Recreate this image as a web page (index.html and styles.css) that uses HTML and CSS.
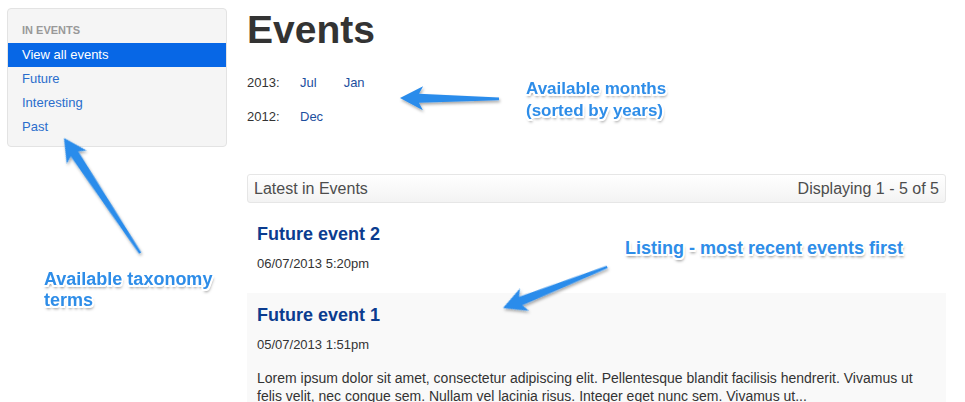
FILE: index.html
```html
<!DOCTYPE html>
<html lang="en">
<head>
<meta charset="utf-8">
<title>Events</title>
<link rel="stylesheet" href="styles.css">
</head>
<body>
<div class="page">
  <aside class="sidebar">
    <div class="sidebar-title">IN EVENTS</div>
    <ul class="nav">
      <li><a class="nav-link active" href="#">View all events</a></li>
      <li><a class="nav-link" href="#">Future</a></li>
      <li><a class="nav-link" href="#">Interesting</a></li>
      <li><a class="nav-link" href="#">Past</a></li>
    </ul>
  </aside>
  <main class="main">
    <h1 class="title">Events</h1>
    <div class="archive">
      <div class="archive-row"><span class="year">2013:</span><a class="month" href="#">Jul</a><a class="month" href="#">Jan</a></div>
      <div class="archive-row"><span class="year">2012:</span><a class="month" href="#">Dec</a></div>
    </div>
    <div class="listing-bar">
      <span class="listing-title">Latest in Events</span>
      <span class="listing-count">Displaying 1 - 5 of 5</span>
    </div>
    <div class="list">
      <article class="item">
        <h2 class="item-title"><a href="#">Future event 2</a></h2>
        <div class="item-date">06/07/2013 5:20pm</div>
      </article>
      <article class="item alt">
        <h2 class="item-title"><a href="#">Future event 1</a></h2>
        <div class="item-date">05/07/2013 1:51pm</div>
        <p class="item-text">Lorem ipsum dolor sit amet, consectetur adipiscing elit. Pellentesque blandit facilisis hendrerit. Vivamus ut felis velit, nec congue sem. Nullam vel lacinia risus. Integer eget nunc sem. Vivamus ut...</p>
      </article>
    </div>
  </main>
</div>

<svg class="overlay" width="965" height="402" viewBox="0 0 965 402" aria-hidden="true">
  <defs>
    <filter id="sh" x="-20%" y="-20%" width="140%" height="140%">
      <feDropShadow dx="1" dy="2" stdDeviation="1.4" flood-color="#000" flood-opacity="0.35"/>
    </filter>
  </defs>
  <g fill="#2b8ceb" filter="url(#sh)">
    <polygon transform="translate(400 98) rotate(0.5)" points="0,0 23,-12 19,-4.5 99,-1.3 99,1.3 19,4.5 23,12"/>
    <polygon transform="translate(503 308) rotate(-21.5)" points="0,0 23,-12 19,-4.5 112,-1.3 112,1.3 19,4.5 23,12"/>
    <polygon transform="translate(64 138) rotate(56.5)" points="0,0 23,-12 19,-4.5 138,-1.3 138,1.3 19,4.5 23,12"/>
  </g>
</svg>
<div class="note note-months">Available months<br>(sorted by years)</div>
<div class="note note-listing">Listing - most recent events first</div>
<div class="note note-terms">Available taxonomy<br>terms</div>
</body>
</html>
```

FILE: styles.css
```css
* { box-sizing: border-box; }
html, body { margin: 0; padding: 0; background: #fff; }
body {
  font-family: "Liberation Sans", Arial, Helvetica, sans-serif;
  color: #333;
  width: 965px;
  height: 402px;
  overflow: hidden;
  position: relative;
}
a { text-decoration: none; }

.page {
  display: flex;
  gap: 20px;
  padding: 8px 19px 0 7px;
}

/* sidebar */
.sidebar {
  width: 220px;
  flex: 0 0 220px;
  align-self: flex-start;
  background: #f5f5f5;
  border: 1px solid #e3e3e3;
  border-radius: 4px;
  padding: 0 0 7px 0;
}
.sidebar-title {
  padding: 14px 0 6px 14px;
  font-size: 11px;
  line-height: 14px;
  font-weight: bold;
  color: #999;
  text-transform: uppercase;
}
.nav { list-style: none; margin: 0; padding: 0; }
.nav-link {
  display: block;
  padding: 0 14px;
  font-size: 13px;
  line-height: 24px;
  height: 24px;
  color: #2a6dcc;
}
.nav-link.active { background: #0767e6; color: #fff; }

/* main */
.main { flex: 1; min-width: 0; }
.title {
  margin: 0;
  font-size: 39px;
  line-height: 43px;
  font-weight: bold;
  color: #333;
}
.archive {
  margin-top: 23px;
  display: flex;
  flex-direction: column;
  gap: 16px;
}
.archive-row { display: flex; font-size: 13px; line-height: 18px; }
.year { width: 53px; color: #333; }
.month { color: #1d4f9e; margin-right: 27px; }

.listing-bar {
  margin-top: 48px;
  height: 29px;
  display: flex;
  justify-content: space-between;
  align-items: center;
  padding: 0 6px;
  border: 1px solid #e6e6e6;
  border-radius: 3px;
  background: linear-gradient(#ffffff, #f3f3f3);
  font-size: 16px;
  color: #4d4d4d;
}

.list { margin-top: 9px; }
.item { padding: 11px 10px 20px 10px; }
.item.alt { background: #f9f9f9; }
.item-title {
  margin: 0;
  font-size: 18px;
  line-height: 22px;
  font-weight: bold;
}
.item-title a { color: #0b3c8f; }
.item-date {
  margin-top: 10px;
  font-size: 13px;
  line-height: 18px;
  color: #333;
}
.item-text {
  margin: 15px 0 0 0;
  font-size: 14px;
  line-height: 18px;
  color: #333;
}

/* annotation overlay */
.overlay { position: absolute; left: 0; top: 0; pointer-events: none; }
.note {
  position: absolute;
  font-family: "Liberation Sans", Arial, Helvetica, sans-serif;
  font-weight: bold;
  color: #2e8de8;
  white-space: nowrap;
  text-shadow:
    -1.5px -1.5px 0 #fff, 1.5px -1.5px 0 #fff, -1.5px 1.5px 0 #fff, 1.5px 1.5px 0 #fff,
    0 -2px 0 #fff, 0 2px 0 #fff, -2px 0 0 #fff, 2px 0 0 #fff,
    1px 3px 3px rgba(0,0,0,0.5);
}
.note-months { left: 526px; top: 78px; font-size: 17px; line-height: 22px; }
.note-listing { left: 625px; top: 237px; font-size: 18px; line-height: 22px; }
.note-terms { left: 44px; top: 269px; font-size: 18px; line-height: 21px; }
```
